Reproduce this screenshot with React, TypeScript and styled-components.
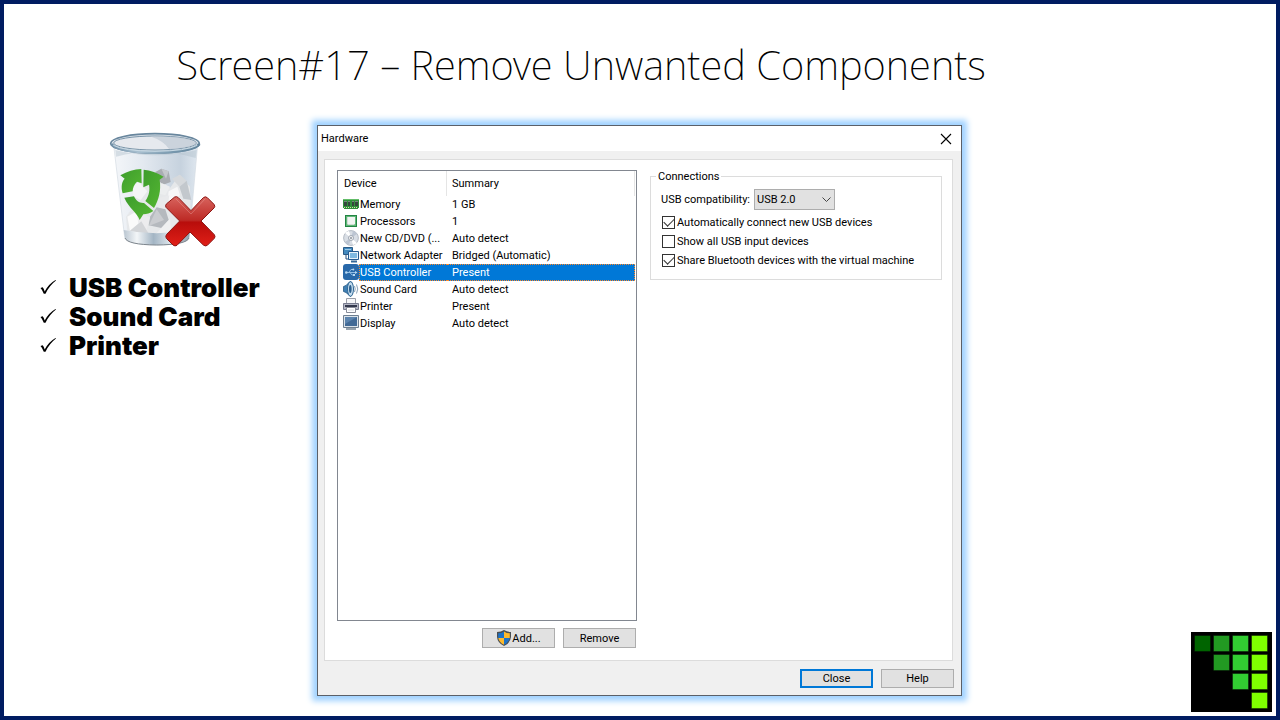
import React from 'react';
import styled, { createGlobalStyle } from 'styled-components';

const GlobalStyle = createGlobalStyle`
  * { box-sizing: border-box; }
  body { margin: 0; background: #fff; color: #000; }
`;

const Slide = styled.div`
  min-height: 100vh;
  display: flex;
  flex-direction: column;
  border: 4px solid #001c61;
  background: #fff;
`;

const Title = styled.h1`
  margin: 0;
  padding: 32px 118px 26px 0;
  text-align: center;
  font: 200 40px/58px 'Noto Sans', 'Open Sans', sans-serif;
`;

const Content = styled.main`
  flex: 1;
  display: grid;
  grid-template-columns: 313px minmax(0, 1fr) 314px;
`;

const Sidebar = styled.aside`
  padding-left: 36px;
`;

const BinPicture = styled.svg`
  display: block;
  width: 140px;
  height: 140px;
  margin-left: 50px;
`;

const CheckList = styled.ul`
  margin: 13px 0 0;
  padding: 0;
  list-style: none;
  font: 900 26px/29px Inter, 'Liberation Sans', sans-serif;
`;

const CheckItem = styled.li`
  display: flex;
  align-items: center;
  gap: 12px;
  white-space: nowrap;
`;

const Dialog = styled.section`
  align-self: start;
  margin-top: 5px;
  border: 1px solid #5b6068;
  background: #f0f0f0;
  box-shadow: 0 0 6px 5px #a0d2ff;
  font: 11px/17px Roboto, 'Liberation Sans', sans-serif;
`;

const TitleBar = styled.header`
  display: flex;
  align-items: center;
  justify-content: space-between;
  height: 25px;
  padding: 0 9px 0 3px;
  background: #fff;
`;

const DialogName = styled.h2`
  margin: 0;
  font: inherit;
`;

const IconButton = styled.button`
  display: flex;
  padding: 0;
  border: 0;
  background: none;
`;

const Panel = styled.div`
  display: grid;
  grid-template-columns: 300px minmax(0, 1fr);
  gap: 13px;
  margin: 8px 8px 0 6px;
  padding: 10px 10px 12px 12px;
  border: 1px solid #dcdcdc;
  background: #fff;
`;

const DeviceBox = styled.div`
  height: 451px;
  padding-right: 1px;
  border: 1px solid #828790;
`;

const DeviceTable = styled.table`
  width: 100%;
  table-layout: fixed;
  border-collapse: separate;
  border-spacing: 0;
`;

const HeadCell = styled.th<{ $width?: string }>`
  width: ${(p) => p.$width ?? 'auto'};
  height: 25px;
  padding: 0 0 0 ${(p) => (p.$width ? 6 : 5)}px;
  border-right: 1px solid #e5e5e5;
  text-align: left;
  font-weight: 400;
`;

const Cell = styled.td`
  height: 17px;
  padding: 0;
`;

const DeviceName = styled.div`
  display: flex;
  padding-left: 5px;
`;

const CellText = styled.span<{ $selected: boolean; $side: 'left' | 'right' }>`
  flex: 1;
  display: block;
  height: 17px;
  padding-left: ${(p) => (p.$side === 'left' ? 0 : 5)}px;
  border: 1px ${(p) => (p.$selected ? 'dotted #ff8728' : 'solid transparent')};
  border-${(p) => (p.$side === 'left' ? 'right' : 'left')}-width: 0;
  background: ${(p) => (p.$selected ? '#0078d7' : 'transparent')};
  color: ${(p) => (p.$selected ? '#fff' : '#000')};
  line-height: 16px;
  white-space: nowrap;
`;

const SmallIcon = styled.svg`
  flex: none;
  display: block;
  width: 16px;
  height: 16px;
`;

const Actions = styled.div`
  display: flex;
  justify-content: flex-end;
  gap: 8px;
`;

const DeviceActions = styled(Actions)`
  margin: 7px 1px 0 0;
`;

const Footer = styled(Actions)`
  padding: 8px 7px 7px;
`;

const PushButton = styled.button<{ $primary?: boolean }>`
  display: flex;
  align-items: center;
  justify-content: center;
  width: 73px;
  height: ${(p) => (p.$primary === undefined ? 20 : 19)}px;
  padding: 0;
  border: ${(p) => (p.$primary ? '2px solid #0078d7' : '1px solid #adadad')};
  background: #e1e1e1;
  color: #000;
  font: inherit;
`;

const Connections = styled.fieldset`
  align-self: start;
  min-width: 0;
  margin: 0;
  padding: 6px 10px 9px;
  border: 1px solid #dcdcdc;
`;

const Legend = styled.legend`
  margin-left: -5px;
  padding: 0 2px;
  line-height: 13px;
`;

const Field = styled.div`
  display: flex;
  align-items: center;
  gap: 6px;
  height: 21px;
  margin-bottom: 3px;
`;

const FieldLabel = styled.label`
  width: 87px;
  white-space: nowrap;
`;

const SelectWrap = styled.span`
  position: relative;
  width: 81px;
`;

const Select = styled.select`
  display: block;
  appearance: none;
  width: 100%;
  height: 21px;
  padding: 0 2px;
  border: 1px solid #adadad;
  border-radius: 0;
  background: #e1e1e1;
  color: #000;
  font: inherit;
`;

const SelectArrow = styled.svg`
  position: absolute;
  right: 4px;
  top: 8px;
  width: 9px;
  height: 6px;
  pointer-events: none;
`;

const CheckRow = styled.label`
  display: flex;
  align-items: center;
  gap: 2px;
  height: 19px;
  padding-left: 1px;
  white-space: nowrap;
`;

const CheckBox = styled.input`
  appearance: none;
  flex: none;
  display: grid;
  place-items: center;
  width: 13px;
  height: 13px;
  margin: 0;
  border: 1px solid #333;
  background: #fff;
  &:checked::before {
    content: '';
    width: 9px;
    height: 5px;
    margin-top: -3px;
    border: solid #333;
    border-width: 0 0 1px 1px;
    transform: rotate(-45deg);
  }
`;

const Logo = styled.svg`
  display: block;
  place-self: end;
  width: 81px;
  height: 80px;
  margin: 0 4px 4px 0;
`;

function RecycleBin() {
  return (
    <BinPicture viewBox="0 0 420 420" role="img" aria-label="Recycle bin">
      <defs>
        <linearGradient id="glass" x1="0" x2="1">
          <stop offset="0" stopColor="#f4f6f9" />
          <stop offset=".35" stopColor="#e3e9f0" />
          <stop offset=".8" stopColor="#c6d2de" />
          <stop offset="1" stopColor="#dfe7ef" />
        </linearGradient>
        <linearGradient id="rim" x1="0" x2="1">
          <stop offset="0" stopColor="#6f8ea6" />
          <stop offset=".3" stopColor="#a9c0d0" />
          <stop offset=".7" stopColor="#7798ae" />
          <stop offset="1" stopColor="#5f8199" />
        </linearGradient>
        <linearGradient id="base" x1="0" x2="1">
          <stop offset="0" stopColor="#b9c5d0" />
          <stop offset=".2" stopColor="#f3f6f8" />
          <stop offset=".45" stopColor="#a3b5c4" />
          <stop offset=".7" stopColor="#dde5eb" />
          <stop offset="1" stopColor="#8e9daa" />
        </linearGradient>
        <linearGradient id="leaf" x1="0" y1="0" x2="1" y2="1">
          <stop offset="0" stopColor="#3d9c2c" />
          <stop offset="1" stopColor="#56b832" />
        </linearGradient>
        <linearGradient id="cross" x1="0" y1="0" x2="0" y2="1">
          <stop offset="0" stopColor="#d8645e" />
          <stop offset=".48" stopColor="#bd2a25" />
          <stop offset=".52" stopColor="#b80d0b" />
          <stop offset="1" stopColor="#e01f17" />
        </linearGradient>
      </defs>
      <path d="M72 84 L104 352 Q110 374 200 375 Q292 374 298 352 L322 84Z" fill="url(#glass)" stroke="#d3dbe3" strokeWidth="2" />
      <path d="M76 90 Q195 122 320 90 L317 114 Q195 78 78 110Z" fill="#b2c0cd" opacity=".45" />
      <g>
        <path d="M108 290 L130 262 L132 210 L160 186 L196 170 L240 204 L268 164 L300 200 L304 330 L240 346 L112 334Z" fill="#e6e8ea" />
        <path d="M196 156 L214 146 L236 154 L242 186 L220 194 L200 178Z" fill="#a9adb2" />
        <path d="M214 146 L236 154 L228 176Z" fill="#c4c7cb" />
        <path d="M246 176 L270 164 L290 182 L268 200Z" fill="#d6d9dc" />
        <path d="M268 200 L290 182 L304 240 L280 236Z" fill="#c3c8cd" />
        <path d="M236 214 L262 200 L270 226 L232 250Z" fill="#f7f7f8" />
        <path d="M196 200 L216 190 L240 200 L226 226 L204 220Z" fill="#eceeef" />
        <path d="M200 262 L226 268 L236 300 L214 324 L176 316 L180 290Z" fill="#b5b9be" />
        <path d="M200 268 L222 300 L176 318Z" fill="#caccd0" />
        <path d="M128 200 L146 186 L172 214 L152 240 L128 228Z" fill="#f5f5f6" />
        <path d="M112 290 L140 274 L154 304 L120 332Z" fill="#fafafa" />
        <path d="M140 274 L180 292 L170 330 L146 320Z" fill="#ececee" />
        <path d="M120 332 L154 304 L178 344Z" fill="#d3d5d8" />
        <path d="M200 236 L238 226 L232 268 L206 262Z" fill="#e9eaec" />
        <path d="M214 324 L240 296 L244 344 L190 350Z" fill="#eff0f1" />
      </g>
      <path d="M101 330 Q198 350 300 330 L297 354 Q290 374 200 375 Q112 374 105 354Z" fill="url(#base)" />
      <path d="M105 354 Q112 374 200 375 Q290 374 297 354" fill="none" stroke="#7e868d" strokeWidth="3" />
      <g fill="url(#leaf)">
        <path d="M98 220 C92 200 96 184 104 176 L91 166 Q122 148 154 147 L155 190 L141 185 C132 194 128 204 128 214Z" />
        <path d="M161 149 Q192 152 221 170 L209 179 C214 212 206 240 192 264 L166 243 C178 226 180 208 177 194 L160 202Z" />
        <path d="M103 233 L132 229 C138 242 148 250 162 249 L190 273 C180 280 170 282 160 283 L149 300 C142 278 116 264 103 233Z" />
      </g>
      <ellipse cx="195" cy="70" rx="133" ry="29" fill="#dce3ea" stroke="#68869d" strokeWidth="5" />
      <ellipse cx="195" cy="69" rx="124" ry="21" fill="#e6e9ee" stroke="#7994a8" strokeWidth="3" />
      <path d="M180 49 Q290 46 318 68 Q312 82 238 88 Q220 62 180 49Z" fill="#bfc9d4" opacity=".7" />
      <path d="M64 72 Q80 96 195 97 Q312 96 328 72" fill="none" stroke="url(#rim)" strokeWidth="9" />
      <path d="M70 76 Q100 93 195 94 Q290 93 322 76" fill="none" stroke="#c9dae5" strokeWidth="3" />
      <path
        d="M254 231 Q260 228 265 233 L303 272 L340 233 Q346 228 352 233 L372 253 Q377 259 372 264 L333 303 L373 344 Q377 350 373 355 L352 376 Q346 380 340 375 L300 336 L261 376 Q255 380 249 375 L229 355 Q225 349 230 343 L269 303 L228 262 Q225 257 229 252Z"
        fill="url(#cross)"
        stroke="#8d1512"
        strokeWidth="3"
      />
      <path d="M257 236 L303 282 L346 236" fill="none" stroke="#e79a95" strokeWidth="2" opacity=".7" />
    </BinPicture>
  );
}

const TickShape = styled.svg`
  flex: none;
  width: 17px;
  height: 16px;
`;

const Tick = () => (
  <TickShape viewBox="0 0 17 16" aria-hidden="true">
    <path d="M0.500 8 L2.700 7.200 Q3.900 8.800 4.700 11.500 Q8.500 4 15.500 0 L16 0.600 Q9.500 5.500 5.500 13.800 L3.800 13.800 Q2.500 10 0.500 8Z" fill="#000" />
  </TickShape>
);

const icons: Record<string, React.ReactNode> = {
  Memory: (
    <>
      <path d="M0 3H16V12H15V13H1V12H0Z" fill="#2f8f3a" />
      <path d="M0 3H16V4H0Z" fill="#63bd69" />
      <path d="M1 5h3v5h-3zM5 5h2v5h-2zM9 5h2v5h-2zM12 5h3v5h-3z" fill="#33473c" />
      <path d="M1 5h3v1h-3zM5 5h2v1h-2zM9 5h2v1h-2zM12 5h3v1h-3z" fill="#77857d" />
      <path d="M1 11.500h14" stroke="#d5dfae" strokeWidth="1" strokeDasharray="1 1" />
    </>
  ),
  Processors: (
    <>
      <path d="M2 2H14V14H2Z" fill="#238443" />
      <path d="M3 3H13V13H3Z" fill="#5fb878" />
      <path d="M4 4H12V11L11 12H5L4 11Z" fill="#d3ddd6" />
      <path d="M5 4H12V11H5Z" fill="#f1f4f2" />
    </>
  ),
  'New CD/DVD (...': (
    <>
      <circle cx="8" cy="8" r="7.400" fill="#d9dee5" stroke="#a4acb8" strokeWidth=".8" />
      <path d="M8 8L2 3A8 8 0 0 1 6 1Z M8 8L14 13A8 8 0 0 1 10 15Z" fill="#fff" />
      <path d="M8 8L10 1A7 7 0 0 1 14 4Z M8 8L6 15A7 7 0 0 1 2 12Z" fill="#bcc5d2" />
      <circle cx="8" cy="8" r="2.500" fill="#f4f4f4" stroke="#8f98a5" strokeWidth=".8" />
      <circle cx="8" cy="8" r="1" fill="#8a929d" />
    </>
  ),
  'Network Adapter': (
    <>
      <path d="M0.500 0.500H9.500V7.500H0.500Z" fill="#4289be" stroke="#2a5a86" />
      <path d="M2 2H8V3H2Z" fill="#9fcbe8" />
      <path d="M3 8V12H6" fill="none" stroke="#244f7c" />
      <path d="M5.500 4.500H15.500V12.500H5.500Z" fill="#e7f2fa" stroke="#245b91" />
      <path d="M7 6H14V11H7Z" fill="#7fb9e1" />
      <path d="M8 14.500H14" stroke="#356898" strokeWidth="2" />
    </>
  ),
  'USB Controller': (
    <>
      <rect width="16" height="16" rx="3" fill="#2868a9" />
      <path d="M3 8.500H13M6 8.500L8 5.500H10M7 8.500L9 11H10.500" fill="none" stroke="#9cc5e9" strokeWidth=".9" />
      <circle cx="3.300" cy="8.500" r="1.300" fill="#b7d8f2" />
      <path d="M12 7L14.500 8.500L12 10Z" fill="#b7d8f2" />
      <circle cx="10.300" cy="5.500" r="1" fill="#b7d8f2" />
      <path d="M10 10h2v2h-2z" fill="#b7d8f2" />
    </>
  ),
  'Sound Card': (
    <>
      <path d="M0.500 5.500L3 4.500L7 0.500Q9 0.500 9.500 3L9.500 12Q9 15 7.500 15.500L3 11.500L0.500 10.500Z" fill="#3f7fb4" stroke="#275983" strokeWidth=".8" />
      <ellipse cx="7.500" cy="8" rx="3" ry="7.300" fill="#c4dcee" stroke="#2f6795" strokeWidth="1" />
      <ellipse cx="7.300" cy="8" rx="1.300" ry="4" fill="#2d608e" />
      <path d="M11.500 5Q13 8 11.500 11M13.500 3.500Q16 8 13.500 12.500" fill="none" stroke="#8ca2b6" />
    </>
  ),
  Printer: (
    <>
      <path d="M3.500 0.500H12.500V6H3.500Z" fill="#f7f7f9" stroke="#9b9fa8" />
      <path d="M0.500 5.500H15.500V11.500H0.500Z" fill="#b4b7c5" stroke="#777b8e" />
      <path d="M2 7H14V9H2Z" fill="#33384d" />
      <path d="M3.500 9.500H12.500V14.500H3.500Z" fill="#fff" stroke="#888c98" />
      <path d="M5 12h6" stroke="#d4d7dd" />
    </>
  ),
  Display: (
    <>
      <path d="M0.500 0.500H15.500V12.500H0.500Z" fill="#dce3ea" stroke="#6e7f90" />
      <path d="M2 2H14V11H2Z" fill="#426a96" />
      <path d="M2 2H14L2 9Z" fill="#5c84ae" />
      <path d="M3 13H13V15H3Z" fill="#98a4af" />
    </>
  ),
};

const devices = [
  ['Memory', '1 GB'],
  ['Processors', '1'],
  ['New CD/DVD (...', 'Auto detect'],
  ['Network Adapter', 'Bridged (Automatic)'],
  ['USB Controller', 'Present'],
  ['Sound Card', 'Auto detect'],
  ['Printer', 'Present'],
  ['Display', 'Auto detect'],
];

const options: [string, boolean][] = [
  ['Automatically connect new USB devices', true],
  ['Show all USB input devices', false],
  ['Share Bluetooth devices with the virtual machine', true],
];

const Shield = () => (
  <SmallIcon viewBox="0 0 16 16" aria-hidden="true">
    <path d="M8 0Q11 2 15 2V7Q14.500 13 8 16Q1.500 13 1 7V2Q5 2 8 0Z" fill="#4b4f52" />
    <path d="M8 1.400V8H2.200V3.300Q5.500 3.300 8 1.400Z" fill="#1c72c8" />
    <path d="M8 1.400V8H13.800V3.300Q10.500 3.300 8 1.400Z" fill="#fdb92c" />
    <path d="M8 8V14.700Q3 12.300 2.300 8Z" fill="#fdb92c" />
    <path d="M8 8V14.700Q13 12.300 13.700 8Z" fill="#1c72c8" />
  </SmallIcon>
);

const logoColumns = ['#006400', '#229a22', '#32cd32', '#7fff00'];

export default function App() {
  return (
    <>
      <GlobalStyle />
      <Slide>
        <Title>Screen#17 – Remove Unwanted Components</Title>
        <Content>
          <Sidebar>
            <RecycleBin />
            <CheckList>
              {['USB Controller', 'Sound Card', 'Printer'].map((name) => (
                <CheckItem key={name}>
                  <Tick />
                  {name}
                </CheckItem>
              ))}
            </CheckList>
          </Sidebar>
          <Dialog role="dialog" aria-labelledby="dialog-name">
            <TitleBar>
              <DialogName id="dialog-name">Hardware</DialogName>
              <IconButton type="button" aria-label="Close window">
                <svg width="12" height="12" viewBox="0 0 12 12">
                  <path d="M1 1L11 11M11 1L1 11" stroke="#000" strokeWidth="1.100" />
                </svg>
              </IconButton>
            </TitleBar>
            <Panel>
              <div>
                <DeviceBox>
                  <DeviceTable>
                    <thead>
                      <tr>
                        <HeadCell $width="109px">Device</HeadCell>
                        <HeadCell>Summary</HeadCell>
                      </tr>
                    </thead>
                    <tbody>
                      {devices.map(([name, summary]) => {
                        const selected = name === 'USB Controller';
                        return (
                          <tr key={name} aria-selected={selected}>
                            <Cell>
                              <DeviceName>
                                <SmallIcon viewBox="0 0 16 16" aria-hidden="true">{icons[name]}</SmallIcon>
                                <CellText $selected={selected} $side="left">{name}</CellText>
                              </DeviceName>
                            </Cell>
                            <Cell>
                              <CellText $selected={selected} $side="right">{summary}</CellText>
                            </Cell>
                          </tr>
                        );
                      })}
                    </tbody>
                  </DeviceTable>
                </DeviceBox>
                <DeviceActions>
                  <PushButton type="button"><Shield />Add...</PushButton>
                  <PushButton type="button">Remove</PushButton>
                </DeviceActions>
              </div>
              <Connections>
                <Legend>Connections</Legend>
                <Field>
                  <FieldLabel htmlFor="usb-version">USB compatibility:</FieldLabel>
                  <SelectWrap>
                    <Select id="usb-version" defaultValue="USB 2.0">
                      <option>USB 2.0</option>
                    </Select>
                    <SelectArrow viewBox="0 0 9 6" aria-hidden="true">
                      <path d="M0.500 0.500L4.500 4.500L8.500 0.500" fill="none" stroke="#444" />
                    </SelectArrow>
                  </SelectWrap>
                </Field>
                {options.map(([label, checked]) => (
                  <CheckRow key={label}>
                    <CheckBox type="checkbox" defaultChecked={checked} />
                    {label}
                  </CheckRow>
                ))}
              </Connections>
            </Panel>
            <Footer>
              <PushButton type="button" $primary>Close</PushButton>
              <PushButton type="button" $primary={false}>Help</PushButton>
            </Footer>
          </Dialog>
          <Logo viewBox="0 0 81 80" role="img" aria-label="Logo">
            <path d="M0 0H81V80H0Z" fill="#000" />
            {logoColumns.map((color, column) =>
              Array.from({ length: column + 1 }, (_, row) => (
                <rect
                  key={`${column}-${row}`}
                  x={3.5 + column * 19}
                  y={3.5 + row * 19}
                  width="16"
                  height="16"
                  fill={color}
                  stroke="#000"
                  strokeOpacity=".4"
                />
              )),
            )}
          </Logo>
        </Content>
      </Slide>
    </>
  );
}
